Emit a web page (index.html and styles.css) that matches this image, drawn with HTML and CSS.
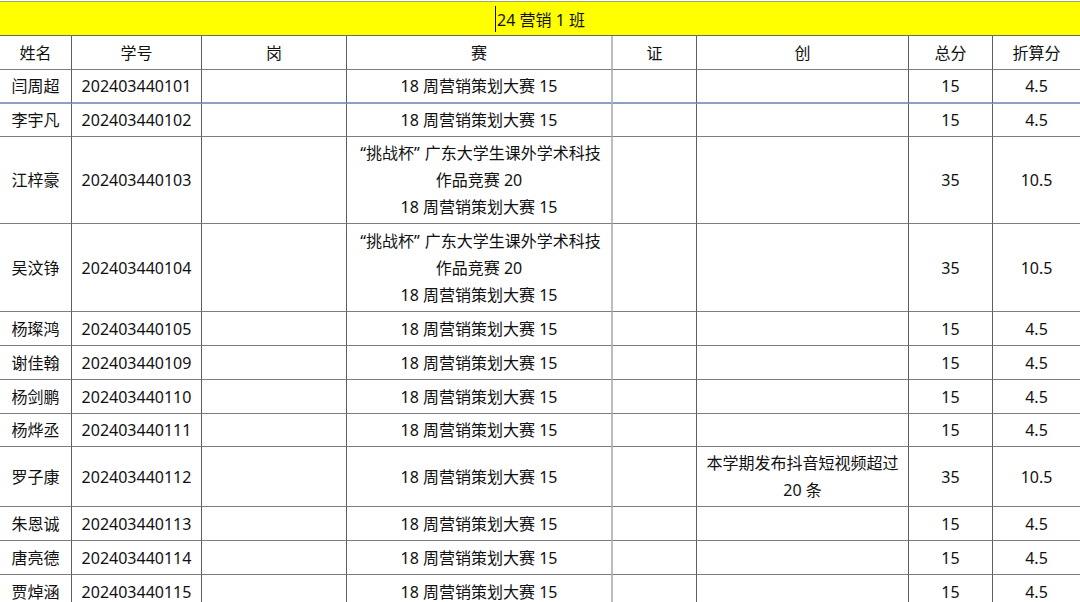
FILE: index.html
```html
<!DOCTYPE html>
<html lang="zh-CN">
<head>
<meta charset="utf-8">
<title>24 营销 1 班</title>
<link rel="stylesheet" href="styles.css">
</head>
<body>
<div class="sheet">
  <div class="title"><span class="caret"></span>24 营销 1 班</div>
  <div class="grid">
    <div class="c">姓名</div><div class="c">学号</div><div class="c">岗</div><div class="c">赛</div><div class="c">证</div><div class="c">创</div><div class="c">总分</div><div class="c">折算分</div>

    <div class="c">闫周超</div><div class="c">202403440101</div><div class="c"></div><div class="c">18 周营销策划大赛 15</div><div class="c"></div><div class="c"></div><div class="c">15</div><div class="c">4.5</div>

    <div class="c">李宇凡</div><div class="c">202403440102</div><div class="c"></div><div class="c">18 周营销策划大赛 15</div><div class="c"></div><div class="c"></div><div class="c">15</div><div class="c">4.5</div>

    <div class="c">江梓豪</div><div class="c">202403440103</div><div class="c"></div><div class="c"><div class="lines"><span class="q">“挑战杯”</span>广东大学生课外学术科技<br>作品竞赛 20<br>18 周营销策划大赛 15</div></div><div class="c"></div><div class="c"></div><div class="c">35</div><div class="c">10.5</div>

    <div class="c">吴汶铮</div><div class="c">202403440104</div><div class="c"></div><div class="c"><div class="lines"><span class="q">“挑战杯”</span>广东大学生课外学术科技<br>作品竞赛 20<br>18 周营销策划大赛 15</div></div><div class="c"></div><div class="c"></div><div class="c">35</div><div class="c">10.5</div>

    <div class="c">杨璨鸿</div><div class="c">202403440105</div><div class="c"></div><div class="c">18 周营销策划大赛 15</div><div class="c"></div><div class="c"></div><div class="c">15</div><div class="c">4.5</div>

    <div class="c">谢佳翰</div><div class="c">202403440109</div><div class="c"></div><div class="c">18 周营销策划大赛 15</div><div class="c"></div><div class="c"></div><div class="c">15</div><div class="c">4.5</div>

    <div class="c">杨剑鹏</div><div class="c">202403440110</div><div class="c"></div><div class="c">18 周营销策划大赛 15</div><div class="c"></div><div class="c"></div><div class="c">15</div><div class="c">4.5</div>

    <div class="c">杨烨丞</div><div class="c">202403440111</div><div class="c"></div><div class="c">18 周营销策划大赛 15</div><div class="c"></div><div class="c"></div><div class="c">15</div><div class="c">4.5</div>

    <div class="c">罗子康</div><div class="c">202403440112</div><div class="c"></div><div class="c">18 周营销策划大赛 15</div><div class="c"></div><div class="c"><div class="lines">本学期发布抖音短视频超过<br>20 条</div></div><div class="c">35</div><div class="c">10.5</div>

    <div class="c">朱恩诚</div><div class="c">202403440113</div><div class="c"></div><div class="c">18 周营销策划大赛 15</div><div class="c"></div><div class="c"></div><div class="c">15</div><div class="c">4.5</div>

    <div class="c">唐亮德</div><div class="c">202403440114</div><div class="c"></div><div class="c">18 周营销策划大赛 15</div><div class="c"></div><div class="c"></div><div class="c">15</div><div class="c">4.5</div>

    <div class="c">贾焯涵</div><div class="c">202403440115</div><div class="c"></div><div class="c">18 周营销策划大赛 15</div><div class="c"></div><div class="c"></div><div class="c">15</div><div class="c">4.5</div>
  </div>
</div>
</body>
</html>
```

FILE: styles.css
```css
html, body {
  margin: 0;
  padding: 0;
  background: #ffffff;
}

body {
  font-family: "Noto Sans", "Noto Sans CJK SC", sans-serif;
  font-size: 16px;
  color: #111111;
  overflow: hidden;
}

.sheet {
  width: 1080px;
  padding-top: 1px;
}

.title {
  box-sizing: border-box;
  height: 35px;
  padding-top: 1px;
  border-top: 1px solid #a5a46c;
  border-bottom: 1px solid #6a6a6a;
  background: #ffff00;
  display: flex;
  align-items: center;
  justify-content: center;
  white-space: nowrap;
}

.caret {
  display: inline-block;
  width: 1px;
  height: 26px;
  background: #111;
  margin-right: 1px;
}

.grid {
  display: grid;
  grid-template-columns: 72px 130px 145px 266px 84px 212px 84px 87px;
  grid-template-rows: 34px 34px 33px 87px 88px 34px 34px 34px 33px 60px 34px 34px 34px;
}

.c {
  box-sizing: border-box;
  padding-top: 1px;
  border-right: 1px solid #5e5e5e;
  border-bottom: 1px solid #7d7d7d;
  display: flex;
  align-items: center;
  justify-content: center;
  text-align: center;
  line-height: 27px;
  white-space: nowrap;
}

.lines {
  text-align: center;
}

.q {
  margin-left: 3px;
  margin-right: 5px;
}

.c:nth-child(8n+4) {
  border-right: 2px solid #bdbdbd;
}

.c:nth-child(8n) {
  border-right: none;
}

.c:nth-child(n+9):nth-child(-n+16) {
  border-bottom: 2px solid #8aa1c3;
}
```
